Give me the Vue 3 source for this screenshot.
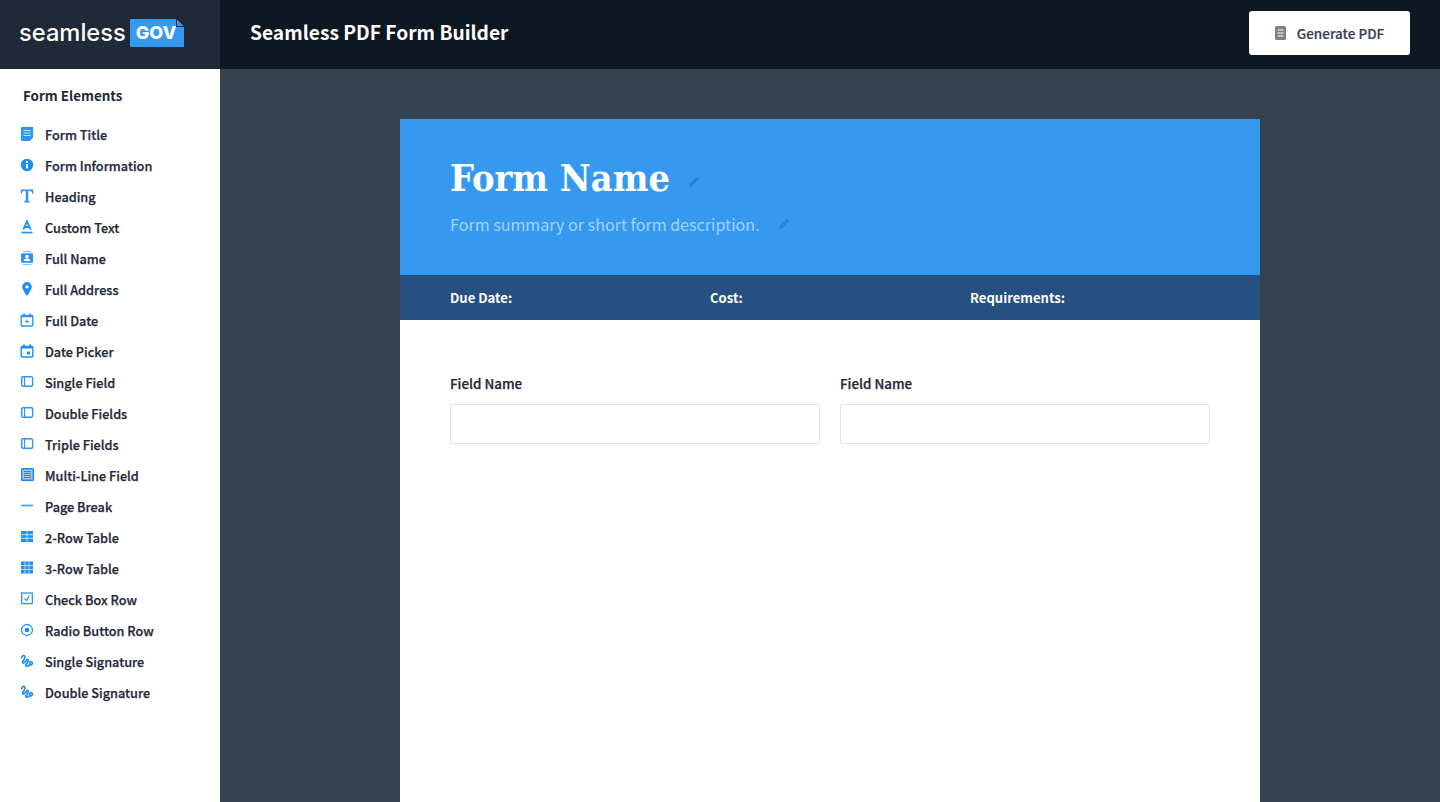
<script setup>
const items = [
  ['Form Title', 'doc'], ['Form Information', 'info'], ['Heading', 'T'], ['Custom Text', 'A'],
  ['Full Name', 'person'], ['Full Address', 'pin'], ['Full Date', 'calplus'], ['Date Picker', 'cal'],
  ['Single Field', 'field'], ['Double Fields', 'field'], ['Triple Fields', 'field'], ['Multi-Line Field', 'multi'],
  ['Page Break', 'dash'], ['2-Row Table', 't2'], ['3-Row Table', 't3'], ['Check Box Row', 'check'],
  ['Radio Button Row', 'radio'], ['Single Signature', 'sig'], ['Double Signature', 'sig']
]
</script>

<template>
  <div class="page">
    <header class="top">
      <div class="brand">
        <span class="wordmark">seamless</span>
        <span class="gov">GOV<i class="fold"></i></span>
      </div>
      <div class="bar">
        <h1 class="app-title">Seamless PDF Form Builder</h1>
        <button class="gen">
          <svg width="11" height="14" viewBox="0 0 11 14"><path fill="#7b818b" d="M1.5 0h8A1.5 1.5 0 0 1 11 1.500v11A1.500 1.500 0 0 1 9.500 14h-8A1.500 1.500 0 0 1 0 12.500v-11A1.500 1.500 0 0 1 1.500 0z"/><path stroke="#fff" stroke-width="1.200" d="M2.500 4h6M2.500 7h6M2.500 10h6"/></svg>
          <span>Generate PDF</span>
        </button>
      </div>
    </header>
    <div class="body">
      <aside class="side">
        <h2 class="side-title">Form Elements</h2>
        <ul class="list">
          <li v-for="it in items" :key="it[0]" class="row">
            <span class="ico">
              <svg width="14" height="14" viewBox="0 0 14 14" fill="none">
                <template v-if="it[1]==='doc'">
                  <path fill="#2b95f3" d="M1 0h12v10.500L9.500 14H1a1 1 0 0 1-1-1V1a1 1 0 0 1 1-1z" transform="translate(1 0) scale(.93 1)"/>
                  <path stroke="#cfe6fc" stroke-width="1.100" d="M3.500 3.500h7M3.500 6h7M3.500 8.500h7"/>
                </template>
                <template v-else-if="it[1]==='info'">
                  <circle cx="7" cy="7" r="6.200" fill="#1a8cf3"/>
                  <path fill="#fff" d="M6 6h2v4.500H6zM6 3h2v2H6z"/>
                </template>
                <template v-else-if="it[1]==='T'">
                  <path fill="#1f8ff3" d="M.8 .500h12.400V4.800h-.9Q12 2 10 1.800H8.200V12l1.800.7v.8H4v-.8l1.800-.7V1.800H4Q2 2 1.700 4.800H.8z"/>
                </template>
                <template v-else-if="it[1]==='A'">
                  <path stroke="#1f8ff3" stroke-width="1.800" d="M3.300 9.700L7 1.300l3.700 8.400M4.600 7h4.800"/>
                  <path stroke="#1f8ff3" stroke-width="1.600" d="M1.500 12.500h11"/>
                </template>
                <template v-else-if="it[1]==='person'">
                  <path stroke="#8cc4f8" stroke-width="1.200" d="M2.500 .500h9M2.500 13.500h9"/>
                  <rect x="1" y="2.300" width="12" height="9.400" rx="1" fill="#2b95f3"/>
                  <circle cx="7" cy="5.500" r="1.700" fill="#fff"/>
                  <path fill="#fff" d="M3.800 10c0-2 1.700-2.500 3.200-2.500s3.200 .5 3.200 2.500z"/>
                </template>
                <template v-else-if="it[1]==='pin'">
                  <path fill="#1f8ff3" fill-rule="evenodd" d="M7 0a4.800 4.800 0 0 1 4.800 4.800C11.800 8 7 14 7 14S2.200 8 2.200 4.800A4.800 4.800 0 0 1 7 0zm0 3.200a1.700 1.700 0 1 0 0 3.400 1.700 1.700 0 0 0 0-3.400z"/>
                </template>
                <template v-else-if="it[1]==='calplus'">
                  <rect x="1.200" y="2.500" width="11.600" height="10.500" rx="1" stroke="#2b95f3" stroke-width="1.400"/>
                  <path stroke="#2b95f3" stroke-width="1.700" d="M1.200 3.500h11.600M4 .5v2M10 .5v2"/>
                  <path stroke="#2b95f3" d="M5 8.500h4M7 6.500v4"/>
                </template>
                <template v-else-if="it[1]==='cal'">
                  <rect x="1.200" y="2.500" width="11.600" height="10.500" rx="1" stroke="#1f8ff3" stroke-width="1.400"/>
                  <path stroke="#1f8ff3" stroke-width="2" d="M1.200 3.500h11.600M4 .5v2M10 .5v2"/>
                  <rect x="7" y="7.500" width="3" height="3" fill="#1f8ff3"/>
                </template>
                <template v-else-if="it[1]==='field'">
                  <rect x="1.700" y="1.700" width="10.900" height="9.600" rx="1.200" stroke="#2b95f3" stroke-width="1.400"/>
                  <path stroke="#2b95f3" stroke-width="1.200" d="M4.500 2v9"/>
                </template>
                <template v-else-if="it[1]==='multi'">
                  <rect x="1.700" y=".7" width="11.600" height="11.600" rx=".8" fill="#9bcdf9" stroke="#1488f2" stroke-width="1.400"/>
                  <path stroke="#1488f2" d="M4 3.500h7M4 5.500h7M4 7.500h7M4 9.500h7"/>
                </template>
                <template v-else-if="it[1]==='dash'">
                  <path stroke="#4aa3f5" stroke-width="1.700" d="M1 6.500h12"/>
                </template>
                <template v-else-if="it[1]==='t2'">
                  <rect x="1" y="1" width="12" height="11" fill="#1f8ff3"/>
                  <path stroke="#b9dcfb" d="M1 4.700h12M1 8.300h12M7 1v11"/>
                </template>
                <template v-else-if="it[1]==='t3'">
                  <rect x="1" y=".5" width="12" height="12" fill="#1f8ff3"/>
                  <path stroke="#b9dcfb" d="M1 4.500h12M1 8.500h12M5 .5v12M9 .5v12"/>
                </template>
                <template v-else-if="it[1]==='check'">
                  <rect x="1.700" y="1" width="10.600" height="10.600" stroke="#2b95f3" stroke-width="1.300"/>
                  <path stroke="#2b95f3" stroke-width="1.300" d="M4.500 6.300l1.900 2.200 3-5"/>
                </template>
                <template v-else-if="it[1]==='radio'">
                  <circle cx="7" cy="7" r="5.500" stroke="#2b95f3" stroke-width="1.300"/>
                  <circle cx="7" cy="7" r="2.200" fill="#1488f2"/>
                </template>
                <template v-else-if="it[1]==='sig'">
                  <path stroke="#1f8ff3" stroke-width="1.700" stroke-linecap="round" stroke-linejoin="round" d="M1.800 3.500Q3.200 .5 4.600 1.800T2.800 7.500Q2.200 9.500 4 8.800T7 5.500Q8.600 4.800 8 7.200T5.800 10.500Q5.500 12.800 8 12T10 8Q11.500 6.800 12.500 9Q12.200 11.500 10.300 10.800"/>
                </template>
              </svg>
            </span>
            <span class="lbl">{{ it[0] }}</span>
          </li>
        </ul>
      </aside>
      <main class="main">
        <section class="sheet">
          <div class="hero">
            <div class="name-row">
              <h2 class="form-name">Form Name</h2>
              <svg class="pen" width="12" height="12" viewBox="0 0 12 12"><path fill="#2c7fc9" d="M9 .8l2.200 2.200-7 7L1 11l1-3.200z"/></svg>
            </div>
            <div class="sum-row">
              <p class="summary">Form summary or short form description.</p>
              <svg class="pen" width="12" height="12" viewBox="0 0 12 12"><path fill="#2c7fc9" d="M9 .8l2.200 2.200-7 7L1 11l1-3.200z"/></svg>
            </div>
          </div>
          <div class="meta">
            <span class="m1">Due Date:</span>
            <span class="m2">Cost:</span>
            <span>Requirements:</span>
          </div>
          <div class="fields">
            <label class="field"><span>Field Name</span><input class="inp" type="text" /></label>
            <label class="field"><span>Field Name</span><input class="inp" type="text" /></label>
          </div>
        </section>
      </main>
    </div>
  </div>
</template>

<style>
html, body { margin: 0; }
</style>

<style scoped>
.page {
  width: 1440px; height: 802px; overflow: hidden; display: flex; flex-direction: column;
  font-family: "Noto Sans CJK JP", "Noto Sans", sans-serif; color: #1f2937;
}
.top { display: flex; height: 69px; flex: none; }
.brand {
  width: 220px; background: #1f2937; display: flex; align-items: center; box-sizing: border-box; padding-left: 19px; gap: 4px;
}
.wordmark { font-family: Inter, sans-serif; font-weight: 500; color: #fff; font-size: 23.7px; line-height: 28px; margin-top: -3px; }
.gov {
  position: relative; width: 54px; height: 28px; margin-top: -3px; background: #359aef; border-radius: 1px; color: #fff;
  font-family: Inter, sans-serif; font-weight: 800; font-size: 18px; line-height: 28px; box-sizing: border-box; padding-left: 6px;
}
.fold {
  position: absolute; right: 0; top: 0; width: 8px; height: 8px; box-sizing: border-box;
  border-left: 1px solid #1f2937; border-bottom: 1px solid #1f2937;
  background: linear-gradient(45deg, #359aef 50%, #1f2937 50%);
}
.bar {
  flex: 1; background: #0f1723; display: flex; align-items: center; justify-content: space-between; padding: 0 30px;
}
.app-title { margin: -5px 0 0; color: #fff; font-size: 19.2px; line-height: 28px; font-weight: 700; }
.gen {
  width: 161px; height: 44px; margin-top: -4px; background: #fff; border: 0; border-radius: 3px; display: flex; align-items: center; justify-content: center; gap: 11px;
  font: 500 13.5px "Noto Sans CJK JP", sans-serif; color: #374151; padding: 0;
  -webkit-text-stroke: .2px #374151;
}
.body { flex: 1; display: flex; min-height: 0; }
.side { width: 220px; flex: none; background: #fff; box-sizing: border-box; padding: 16px 0 0 21px; }
.side-title { margin: 0 0 0 2px; font-size: 13.4px; line-height: 20px; font-weight: 700; color: #1f2937; }
.list { list-style: none; margin: 14px 0 0; padding: 0; }
.row { display: flex; align-items: center; height: 31px; gap: 11px; font-size: 12.7px; font-weight: 500; color: #1f2937; }
.lbl { -webkit-text-stroke: .25px #1f2937; }
.ico { width: 14px; height: 14px; display: block; line-height: 0; margin: -1px 0 0 -1px; }
.main { flex: 1; background: #364150; padding-top: 50px; display: flex; justify-content: center; }
.sheet { width: 860px; height: 800px; background: #fff; flex: none; }
.hero { height: 156px; box-sizing: border-box; background: #359aef; padding: 33px 50px 0; }
.name-row { display: flex; align-items: center; gap: 18px; height: 52px; }
.form-name { margin: 0; font-family: "DejaVu Serif", serif; font-stretch: condensed; font-size: 37.600px; line-height: 52px; font-weight: 700; color: #fff; }
.name-row .pen { margin-top: 7px; }
.sum-row { display: flex; align-items: center; gap: 18px; margin-top: 7px; height: 26px; }
.summary { margin: 0; font-size: 16.1px; line-height: 26px; color: #a5d2fb; }
.meta { height: 45px; background: #264f82; display: flex; align-items: center; padding: 0 50px; color: #fff; font-size: 13.1px; font-weight: 700; }
.m1 { width: 260px; }
.m2 { width: 260px; }
.fields { display: flex; gap: 20px; padding: 53px 50px 0; }
.field { flex: 1; display: flex; flex-direction: column; gap: 10px; font-size: 13.4px; font-weight: 500; color: #1f2937; }
.field span { line-height: 21px; -webkit-text-stroke: .25px #1f2937; }
.inp { height: 40px; box-sizing: border-box; border: 1px solid #dfe2e6; border-radius: 2px; background: #fff; padding: 0; outline: none; }
</style>
